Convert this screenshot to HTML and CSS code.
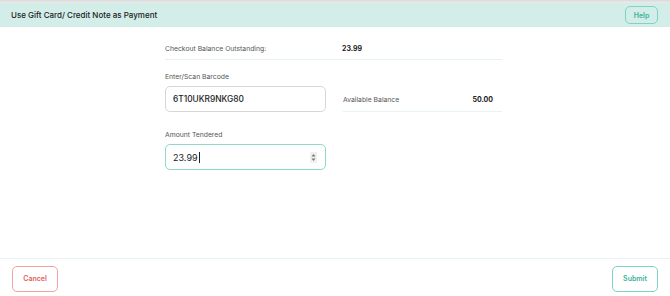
FILE: index.html
```html
<!DOCTYPE html>
<html lang="en">

<head>
    <meta charset="UTF-8">
    <meta name="viewport" content="width=device-width, initial-scale=1.0">
    <title>Gift Card Payment</title>
    <link rel="stylesheet" href="styles.css">
</head>

<body>
    <div class="backdrop"></div>
    <div class="modal">
        <div class="modal-header">
            <h1>Use Gift Card/ Credit Note as Payment</h1>
            <button class="btn btn-teal btn-help">Help</button>
        </div>

        <div class="modal-body">
            <div class="form">
                <div class="summary-row">
                    <span class="summary-label">Checkout Balance Outstanding:</span>
                    <span class="summary-value">23.99</span>
                </div>

                <div class="row">
                    <div class="form-group">
                        <label for="barcode">Enter/Scan Barcode</label>
                        <input type="text" id="barcode" class="input" value="6T10UKR9NKG80">
                    </div>
                    <div class="balance">
                        <span class="balance-label">Available Balance</span>
                        <span class="balance-value">50.00</span>
                    </div>
                </div>

                <div class="row">
                    <div class="form-group form-group-spaced">
                        <label for="amount">Amount Tendered</label>
                        <div class="input input-focus">
                            <span>23.99</span><span class="caret"></span>
                            <span class="spinner">
                                <svg width="5" height="9" viewBox="0 0 5 9">
                                    <path d="M2.5 1 L4.5 3.5 L0.5 3.5 Z" fill="#777" />
                                    <path d="M2.5 8 L4.5 5.5 L0.5 5.5 Z" fill="#777" />
                                </svg>
                            </span>
                        </div>
                    </div>
                </div>
            </div>
        </div>

        <div class="modal-footer">
            <button class="btn btn-red">Cancel</button>
            <button class="btn btn-teal">Submit</button>
        </div>
    </div>
</body>

</html>
```

FILE: styles.css
```css
body {
    font-family: "Inter", "Open Sans", sans-serif;
    margin: 0;
    background-color: #fff;
    color: #222;
}

.backdrop {
    height: 3px;
    background: linear-gradient(#d9d9d9, #ececec);
}

.modal {
    display: flex;
    flex-direction: column;
    height: 293px;
}

.modal-header {
    display: flex;
    align-items: center;
    justify-content: space-between;
    height: 24px;
    padding: 0 12px 0 11px;
    background-color: #d3ede9;
}

h1 {
    margin: 0;
    font-size: 8px;
    font-weight: 500;
    color: #222;
}

.btn {
    font-family: inherit;
    font-size: 7px;
    font-weight: 600;
    background-color: #fff;
    border-radius: 5px;
    padding: 0;
    cursor: pointer;
}

.btn-teal {
    color: #3bb39d;
    border: 1px solid #7fd3c2;
}

.btn-red {
    color: #e0605a;
    border: 1px solid #f1a49e;
}

.btn-help {
    width: 33px;
    height: 18px;
    background-color: transparent;
}

.modal-body {
    flex: 1;
    display: flex;
    justify-content: center;
}

.form {
    width: 337px;
    margin-left: -3px;
}

.summary-row {
    display: flex;
    align-items: flex-end;
    height: 33px;
    padding-bottom: 6px;
    box-sizing: border-box;
    border-bottom: 1px solid #e6f3f1;
}

.summary-label {
    width: 177px;
    font-size: 6.8px;
    color: #555;
}

.summary-value,
.balance-value {
    font-size: 7px;
    font-weight: 700;
    color: #222;
}

.row {
    display: flex;
    gap: 17px;
    align-items: flex-end;
}

.form-group {
    width: 161px;
    margin-top: 12px;
}

.form-group-spaced {
    margin-top: 18px;
}

label {
    display: block;
    font-size: 6.8px;
    color: #555;
    margin-bottom: 5px;
}

.input {
    display: flex;
    align-items: center;
    width: 100%;
    height: 26px;
    padding: 0 7px;
    border: 1px solid #d6d6d6;
    border-radius: 5px;
    font-family: inherit;
    font-size: 8.4px;
    font-weight: 500;
    color: #222;
    box-sizing: border-box;
    outline: none;
}

.input-focus {
    border-color: #8fd8ca;
    font-size: 9px;
    font-weight: 400;
}

.caret {
    width: 1px;
    height: 11px;
    background-color: #222;
    margin-left: 1px;
}

.spinner {
    margin-left: auto;
    display: flex;
    align-items: center;
    justify-content: center;
    width: 7px;
    height: 11px;
    background-color: #f0f0f0;
    margin-right: 1px;
}

.balance {
    flex: 1;
    display: flex;
    align-items: center;
    justify-content: space-between;
    height: 24px;
    padding-right: 9px;
    border-bottom: 1px solid #e6f3f1;
}

.balance-label {
    font-size: 6.8px;
    color: #555;
}

.modal-footer {
    display: flex;
    justify-content: space-between;
    align-items: center;
    height: 38px;
    padding: 2px 12px 0 12px;
    box-sizing: border-box;
    border-top: 1px solid #e6f3f1;
}

.modal-footer .btn {
    width: 46px;
    height: 26px;
}
```
